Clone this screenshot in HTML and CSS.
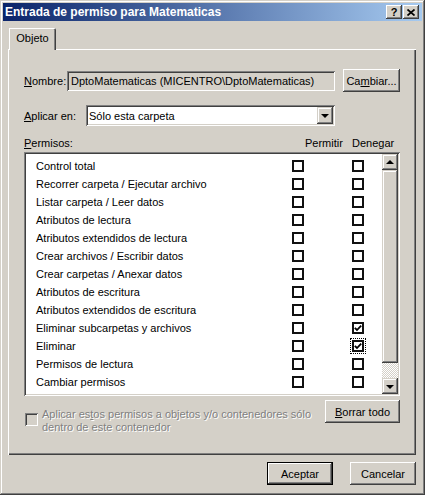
FILE: index.html
```html
<!DOCTYPE html>
<html lang="es">
<head>
<meta charset="utf-8">
<title>Entrada de permiso para Matematicas</title>
<link rel="stylesheet" href="styles.css">
</head>
<body>
<div class="window">
  <div class="titlebar">
    <span class="title">Entrada de permiso para Matematicas</span>
    <span class="tb-btn help">?</span>
    <span class="tb-btn close"><svg width="8" height="7" viewBox="0 0 8 7"><path d="M0.5 0.5L7.5 6.5M7.5 0.5L0.5 6.5" stroke="#000" stroke-width="1.7"/></svg></span>
  </div>
  <div class="body">
    <div class="tabs"><div class="tab">Objeto</div></div>
    <div class="panel">
      <div class="row-name">
        <span class="label-name"><u>N</u>ombre:</span>
        <div class="field">DptoMatematicas (MICENTRO\DptoMatematicas)</div>
        <div class="btn btn-cambiar">Ca<u>m</u>biar...</div>
      </div>
      <div class="row-apply">
        <span class="label-apply"><u>A</u>plicar en:</span>
        <div class="combo">
          <span class="combo-text">Sólo esta carpeta</span>
          <span class="combo-btn"><span class="arrow-down"></span></span>
        </div>
      </div>
      <div class="perm-header">
        <span class="perm-label"><u>P</u>ermisos:</span>
        <span class="col-allow">Permitir</span>
        <span class="col-deny">Denegar</span>
      </div>
      <div class="list">
        <div class="rows">
          <div class="perm-row"><span>Control total</span><span class="cb"></span><span class="cb"></span></div>
          <div class="perm-row"><span>Recorrer carpeta / Ejecutar archivo</span><span class="cb"></span><span class="cb"></span></div>
          <div class="perm-row"><span>Listar carpeta / Leer datos</span><span class="cb"></span><span class="cb"></span></div>
          <div class="perm-row"><span>Atributos de lectura</span><span class="cb"></span><span class="cb"></span></div>
          <div class="perm-row"><span>Atributos extendidos de lectura</span><span class="cb"></span><span class="cb"></span></div>
          <div class="perm-row"><span>Crear archivos / Escribir datos</span><span class="cb"></span><span class="cb"></span></div>
          <div class="perm-row"><span>Crear carpetas / Anexar datos</span><span class="cb"></span><span class="cb"></span></div>
          <div class="perm-row"><span>Atributos de escritura</span><span class="cb"></span><span class="cb"></span></div>
          <div class="perm-row"><span>Atributos extendidos de escritura</span><span class="cb"></span><span class="cb"></span></div>
          <div class="perm-row"><span>Eliminar subcarpetas y archivos</span><span class="cb"></span><span class="cb checked"><svg width="8" height="8" viewBox="0 0 8 8"><path d="M0.8 3.8L3 6L7.2 1.6" fill="none" stroke="#000" stroke-width="1.8"/></svg></span></div>
          <div class="perm-row"><span>Eliminar</span><span class="cb"></span><span class="cb checked focus"><svg width="8" height="8" viewBox="0 0 8 8"><path d="M0.8 3.8L3 6L7.2 1.6" fill="none" stroke="#000" stroke-width="1.8"/></svg></span></div>
          <div class="perm-row"><span>Permisos de lectura</span><span class="cb"></span><span class="cb"></span></div>
          <div class="perm-row"><span>Cambiar permisos</span><span class="cb"></span><span class="cb"></span></div>
        </div>
        <div class="scrollbar">
          <span class="sb-btn"><span class="arrow-up"></span></span>
          <span class="sb-thumb"></span>
          <span class="sb-track"></span>
          <span class="sb-btn"><span class="arrow-down"></span></span>
        </div>
      </div>
      <div class="bottom-row">
        <div class="apply">
          <span class="cb-disabled"></span>
          <span class="apply-text">Aplicar es<u>t</u>os permisos a objetos y/o contenedores sólo dentro de este contenedor</span>
        </div>
        <div class="btn btn-clear"><u>B</u>orrar todo</div>
      </div>
    </div>
    <div class="footer">
      <div class="btn btn-footer default">Aceptar</div>
      <div class="btn btn-footer">Cancelar</div>
    </div>
  </div>
</div>
</body>
</html>
```
FILE: styles.css
```css
* { box-sizing: border-box; }

body {
  margin: 0;
  font-family: "Liberation Sans", Arial, sans-serif;
  font-size: 11px;
  color: #000;
  background: #d4d0c8;
}

.window {
  width: 425px;
  height: 495px;
  background: #d4d0c8;
  padding: 3px;
  display: flex;
  flex-direction: column;
  box-shadow: inset -1px -1px #404040, inset 1px 1px #d4d0c8, inset -2px -2px #808080, inset 2px 2px #fff;
}

.titlebar {
  height: 18px;
  background: linear-gradient(to right, #0a246a, #a6caf0);
  display: flex;
  align-items: center;
  padding: 0 3px 0 2px;
  color: #fff;
  font-weight: bold;
  font-size: 12px;
}

.title { flex: 1; }

.tb-btn {
  width: 16px;
  height: 14px;
  background: #d4d0c8;
  color: #000;
  display: flex;
  align-items: center;
  justify-content: center;
  box-shadow: inset -1px -1px #404040, inset 1px 1px #fff, inset -2px -2px #808080;
  font-size: 11px;
  line-height: 14px;
}

.tb-btn.close { margin-left: 1px; }

.body {
  flex: 1;
  padding: 7px 6px 0 5px;
  display: flex;
  flex-direction: column;
}

.tabs {
  height: 21px;
  display: flex;
  padding-left: 1px;
}

.tab {
  position: relative;
  z-index: 1;
  width: 47px;
  height: 22px;
  background: #d4d0c8;
  display: flex;
  justify-content: center;
  padding-top: 3px;
  line-height: 14px;
  border-top-right-radius: 2px;
  box-shadow: inset 1px 1px #fff, inset -1px 0 #404040, inset -2px 0 #808080;
}

.panel {
  height: 406px;
  padding: 20px 16px 0 16px;
  box-shadow: inset 1px 1px #fff, inset -1px -1px #404040, inset -2px -2px #808080;
}

.row-name {
  display: flex;
  align-items: center;
  height: 23px;
}

.label-name { width: 43px; }

.field {
  width: 268px;
  height: 20px;
  line-height: 20px;
  padding-left: 4px;
  background: #d4d0c8;
  box-shadow: inset 1px 1px #808080, inset -1px -1px #fff, inset 2px 2px #404040, inset -2px -2px #d4d0c8;
  white-space: nowrap;
  overflow: hidden;
}

.btn {
  height: 23px;
  display: flex;
  align-items: center;
  justify-content: center;
  background: #d4d0c8;
  box-shadow: inset -1px -1px #404040, inset 1px 1px #fff, inset -2px -2px #808080, inset 2px 2px #d4d0c8;
}

.btn-cambiar {
  width: 57px;
  margin-left: 8px;
}

.row-apply {
  display: flex;
  align-items: center;
  height: 21px;
  margin-top: 13px;
}

.label-apply { width: 62px; }

.combo {
  width: 249px;
  height: 21px;
  display: flex;
  align-items: center;
  padding: 2px;
  background: #fff;
  box-shadow: inset 1px 1px #808080, inset -1px -1px #fff, inset 2px 2px #404040, inset -2px -2px #d4d0c8;
}

.combo-text {
  flex: 1;
  padding-left: 1px;
}

.combo-btn {
  width: 16px;
  height: 17px;
  display: flex;
  align-items: center;
  justify-content: center;
  background: #d4d0c8;
  box-shadow: inset -1px -1px #404040, inset 1px 1px #d4d0c8, inset -2px -2px #808080, inset 2px 2px #fff;
}

.arrow-down {
  width: 0;
  height: 0;
  border-left: 4px solid transparent;
  border-right: 4px solid transparent;
  border-top: 4px solid #000;
  margin-top: 1px;
}

.arrow-up {
  width: 0;
  height: 0;
  border-left: 4px solid transparent;
  border-right: 4px solid transparent;
  border-bottom: 4px solid #000;
  margin-bottom: 1px;
}

.perm-header {
  display: flex;
  height: 14px;
  line-height: 14px;
  margin-top: 10px;
}

.perm-label { flex: 1; }
.col-allow { width: 47px; }
.col-deny { width: 48px; }

.list {
  height: 244px;
  margin-top: 2px;
  padding: 2px;
  display: flex;
  background: #fff;
  box-shadow: inset 1px 1px #808080, inset -1px -1px #fff, inset 2px 2px #404040, inset -2px -2px #d4d0c8;
}

.rows {
  flex: 1;
  padding: 3px 0 0 10px;
  overflow: hidden;
}

.perm-row {
  display: grid;
  grid-template-columns: 256px 60px 12px;
  justify-items: start;
  align-items: center;
  height: 18px;
  white-space: nowrap;
}

.cb {
  width: 12px;
  height: 12px;
  border: 2px solid #111;
  background: #fff;
  display: flex;
  align-items: center;
  justify-content: center;
}

.cb.focus {
  outline: 1px dotted #000;
  outline-offset: 1px;
}

.scrollbar {
  width: 16px;
  display: flex;
  flex-direction: column;
}

.sb-btn {
  height: 16px;
  display: flex;
  align-items: center;
  justify-content: center;
  background: #d4d0c8;
  box-shadow: inset -1px -1px #404040, inset 1px 1px #d4d0c8, inset -2px -2px #808080, inset 2px 2px #fff;
}

.sb-thumb {
  height: 193px;
  background: #d4d0c8;
  box-shadow: inset -1px -1px #404040, inset 1px 1px #d4d0c8, inset -2px -2px #808080, inset 2px 2px #fff;
}

.sb-track {
  flex: 1;
  background-color: #d4d0c8;
  background-image: conic-gradient(#fff 25%, #d4d0c8 0 50%, #fff 0 75%, #d4d0c8 0);
  background-size: 2px 2px;
}

.bottom-row {
  display: flex;
  justify-content: space-between;
  margin-top: 4px;
}

.apply {
  display: flex;
  align-items: flex-start;
}

.cb-disabled {
  width: 13px;
  height: 13px;
  margin: 13px 0 0 1px;
  background: #d4d0c8;
  box-shadow: inset 1px 1px #808080, inset -1px -1px #fff, inset 2px 2px #404040, inset -2px -2px #d4d0c8;
}

.apply-text {
  width: 276px;
  margin: 8px 0 0 4px;
  line-height: 13px;
  color: #808080;
  text-shadow: 1px 1px #fff;
}

.btn-clear { width: 75px; }

.footer {
  display: flex;
  justify-content: flex-end;
  gap: 17px;
  margin-top: 7px;
}

.btn-footer { width: 66px; }

.btn-footer.default {
  border: 1px solid #000;
  box-shadow: inset -1px -1px #404040, inset 1px 1px #fff, inset -2px -2px #808080;
}
```
